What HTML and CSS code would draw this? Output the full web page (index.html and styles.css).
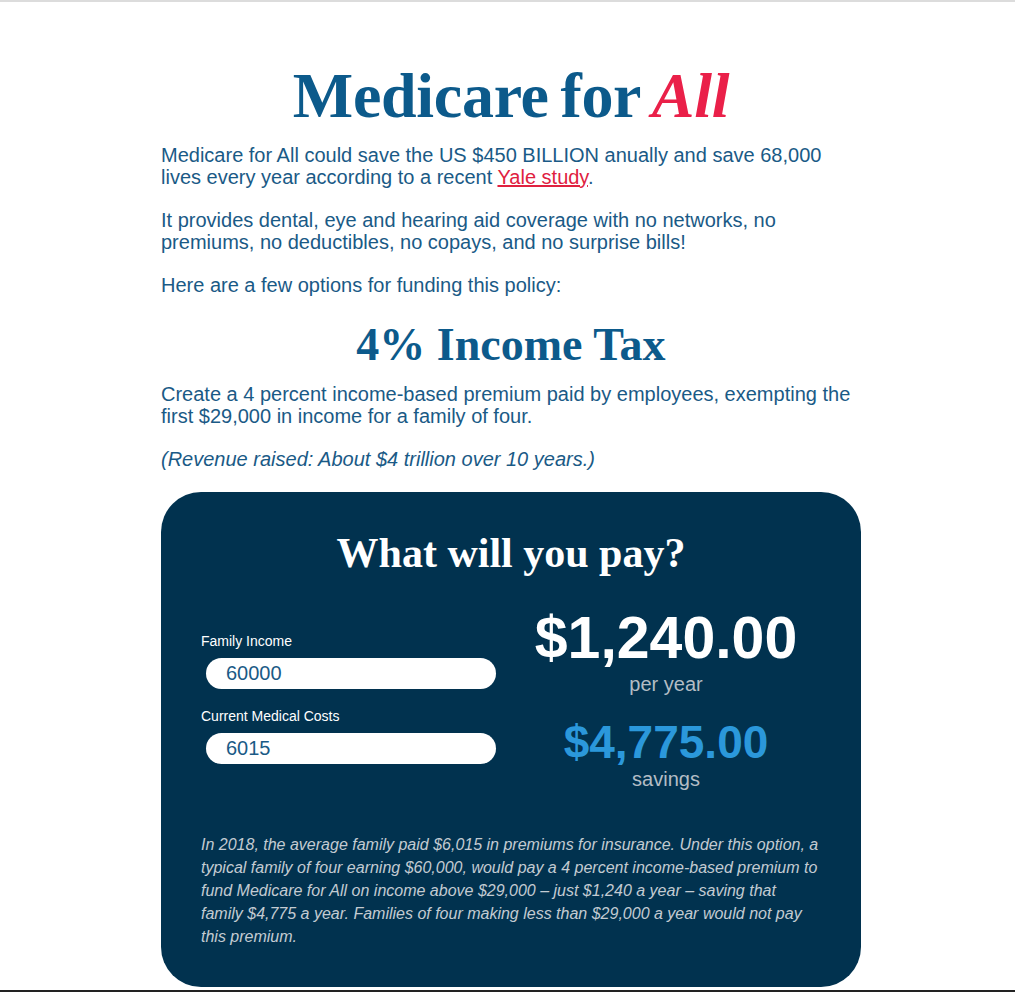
FILE: index.html
```html
<!DOCTYPE html>
<html lang="en">
<head>
<meta charset="utf-8">
<title>Medicare for All</title>
<link rel="stylesheet" href="styles.css">
</head>
<body>
<main class="page">
  <h1 class="title">Medicare for <em class="accent">All</em></h1>
  <p class="text">Medicare for All could save the US $450 BILLION anually and save 68,000 lives every year according to a recent <a class="link" href="#">Yale study</a>.</p>
  <p class="text">It provides dental, eye and hearing aid coverage with no networks, no premiums, no deductibles, no copays, and no surprise bills!</p>
  <p class="text">Here are a few options for funding this policy:</p>
  <h2 class="subtitle">4% Income Tax</h2>
  <p class="text">Create a 4 percent income-based premium paid by employees, exempting the first $29,000 in income for a family of four.</p>
  <p class="text italic">(Revenue raised: About $4 trillion over 10 years.)</p>

  <section class="card">
    <h3 class="card-title">What will you pay?</h3>
    <div class="calc">
      <div class="fields">
        <label class="label" for="income">Family Income</label>
        <input class="field" id="income" type="text" value="60000">
        <label class="label" for="costs">Current Medical Costs</label>
        <input class="field" id="costs" type="text" value="6015">
      </div>
      <div class="results">
        <div class="amount">$1,240.00</div>
        <div class="caption">per year</div>
        <div class="savings">$4,775.00</div>
        <div class="caption caption-tight">savings</div>
      </div>
    </div>
    <p class="note">In 2018, the average family paid $6,015 in premiums for insurance. Under this option, a typical family of four earning $60,000, would pay a 4 percent income-based premium to fund Medicare for All on income above $29,000 – just $1,240 a year – saving that family $4,775 a year. Families of four making less than $29,000 a year would not pay this premium.</p>
  </section>
</main>
<div class="bottom-edge"></div>
</body>
</html>
```

FILE: styles.css
```css
html, body {
  margin: 0;
  padding: 0;
  background: #ffffff;
}

body {
  border-top: 2px solid #dcdcdc;
  font-family: "Liberation Sans", Arial, sans-serif;
  color: #1a5a86;
}

.page {
  width: 700px;
  margin: 0 auto;
  padding: 56px 0 0 7px;
}

.title {
  margin: 0 0 10px;
  font-family: "Liberation Serif", "Times New Roman", serif;
  font-weight: 700;
  font-size: 64px;
  line-height: 76px;
  text-align: center;
  color: #0c5a8b;
  letter-spacing: -0.3px;
  word-spacing: -4px;
}

.accent {
  font-style: italic;
  color: #ea2049;
}

.text {
  margin: 0 0 21px;
  font-size: 20px;
  line-height: 22px;
}

.italic {
  font-style: italic;
  margin-bottom: 22px;
}

.link {
  color: #e0213f;
  text-decoration: underline;
}

.subtitle {
  margin: 0 0 11px;
  font-family: "Liberation Serif", "Times New Roman", serif;
  font-weight: 700;
  font-size: 46px;
  line-height: 1.2;
  text-align: center;
  color: #0c5a8b;
}

.card {
  background: #01324f;
  border-radius: 40px;
  padding: 36px 40px 39px 40px;
  color: #ffffff;
}

.card-title {
  margin: 0;
  font-family: "Liberation Serif", "Times New Roman", serif;
  font-weight: 700;
  font-size: 42px;
  line-height: 1.2;
  text-align: center;
  color: #ffffff;
}

.calc {
  display: grid;
  grid-template-columns: 310px 1fr;
  align-items: start;
  margin-top: 30px;
}

.fields {
  display: flex;
  flex-direction: column;
  align-items: flex-start;
  padding-top: 24px;
}

.label {
  font-size: 14px;
  line-height: 16px;
  color: #ffffff;
  margin-bottom: 9px;
}

.field {
  box-sizing: border-box;
  width: 290px;
  height: 31px;
  margin: 0 0 19px 5px;
  padding: 0 0 0 20px;
  border: none;
  border-radius: 16px;
  background: #ffffff;
  font-family: "Liberation Sans", Arial, sans-serif;
  font-size: 20px;
  color: #1a5a86;
  outline: none;
}

.results {
  display: flex;
  flex-direction: column;
  align-items: center;
}

.amount {
  font-size: 59px;
  line-height: 59px;
  font-weight: 700;
  color: #ffffff;
}

.savings {
  margin-top: 24px;
  font-size: 46px;
  line-height: 46px;
  font-weight: 700;
  color: #2b98db;
}

.caption {
  margin-top: 5px;
  font-size: 20px;
  line-height: 22px;
  color: #b3bdc5;
}

.caption-tight {
  margin-top: 3px;
}

.note {
  margin: 43px 0 0;
  font-size: 16px;
  line-height: 23px;
  font-style: italic;
  color: #c3cbd2;
}

.bottom-edge {
  position: fixed;
  left: 0;
  right: 0;
  bottom: 0;
  height: 2px;
  background: #222222;
}
```
